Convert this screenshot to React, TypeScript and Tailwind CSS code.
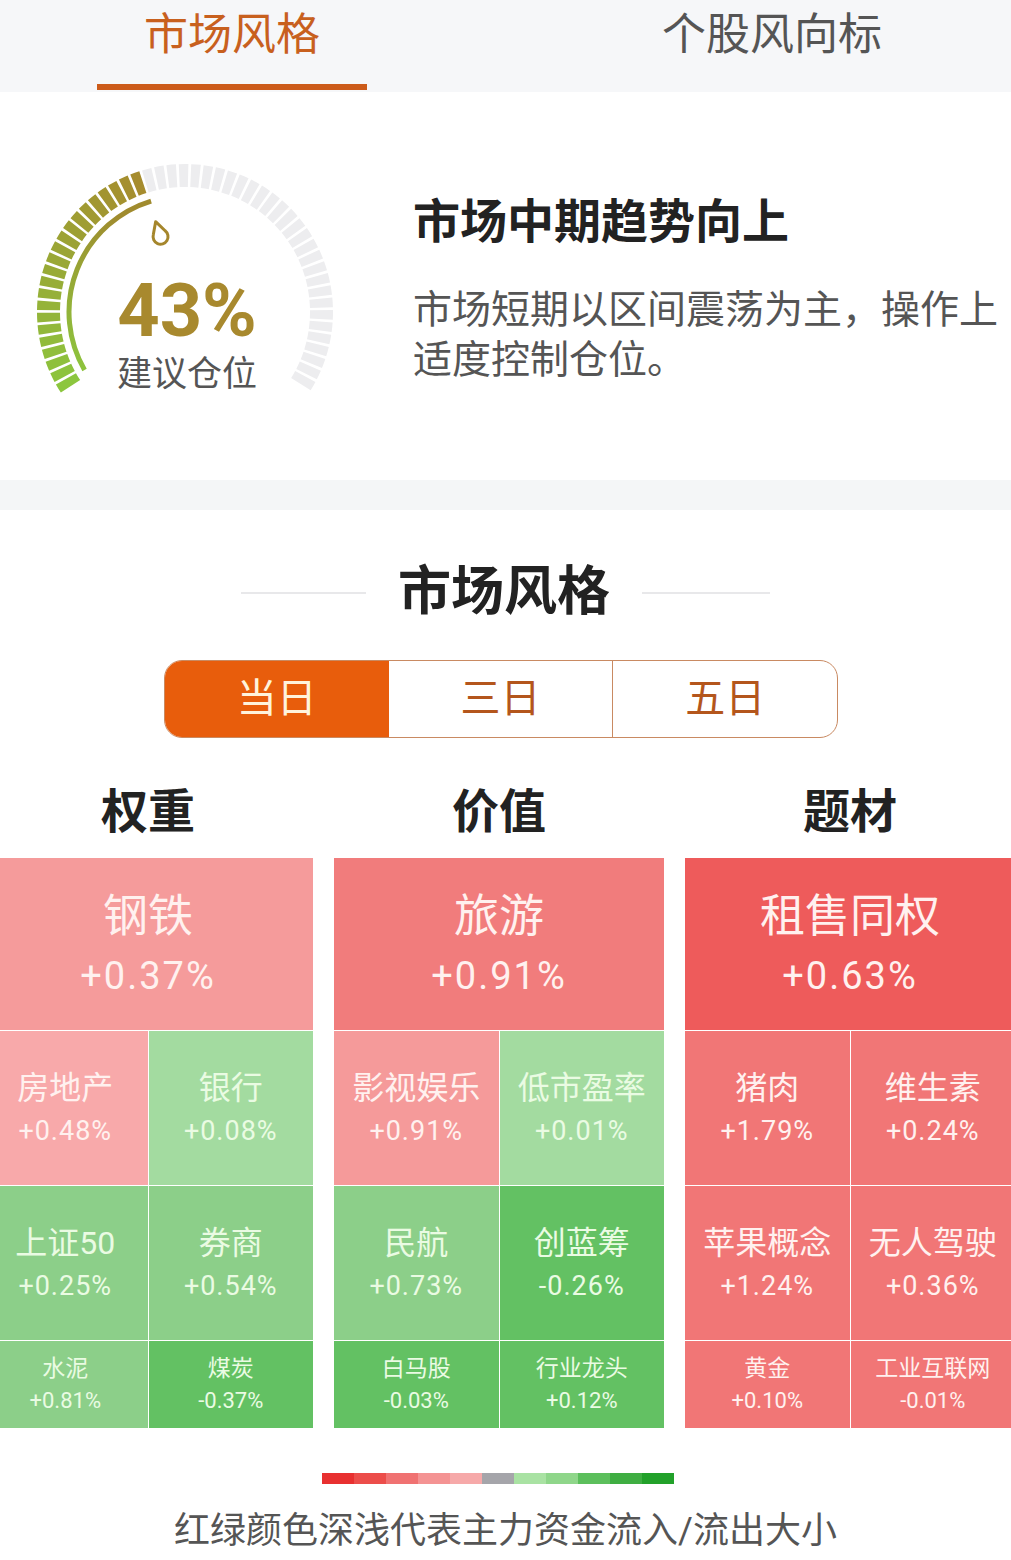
import React from 'react';

type Tile = { name: string; pct: string; bg: string; green?: boolean };
type Column = { title: string; big: Tile; rows: [Tile, Tile][] };

const RED_TEXT = 'text-[#fff1ef]';
const GREEN_TEXT = 'text-[#eafbe3]';

const columns: Column[] = [
  {
    title: '权重',
    big: { name: '钢铁', pct: '+0.37%', bg: 'bg-[#f59b9b]' },
    rows: [
      [
        { name: '房地产', pct: '+0.48%', bg: 'bg-[#f8a9aa]' },
        { name: '银行', pct: '+0.08%', bg: 'bg-[#a3dba0]', green: true },
      ],
      [
        { name: '上证50', pct: '+0.25%', bg: 'bg-[#8ccf89]', green: true },
        { name: '券商', pct: '+0.54%', bg: 'bg-[#8ccf89]', green: true },
      ],
      [
        { name: '水泥', pct: '+0.81%', bg: 'bg-[#8ccf89]', green: true },
        { name: '煤炭', pct: '-0.37%', bg: 'bg-[#63c163]', green: true },
      ],
    ],
  },
  {
    title: '价值',
    big: { name: '旅游', pct: '+0.91%', bg: 'bg-[#f17c7c]' },
    rows: [
      [
        { name: '影视娱乐', pct: '+0.91%', bg: 'bg-[#f59a9a]' },
        { name: '低市盈率', pct: '+0.01%', bg: 'bg-[#a3dba0]', green: true },
      ],
      [
        { name: '民航', pct: '+0.73%', bg: 'bg-[#8ccf89]', green: true },
        { name: '创蓝筹', pct: '-0.26%', bg: 'bg-[#63c163]', green: true },
      ],
      [
        { name: '白马股', pct: '-0.03%', bg: 'bg-[#63c163]', green: true },
        { name: '行业龙头', pct: '+0.12%', bg: 'bg-[#63c163]', green: true },
      ],
    ],
  },
  {
    title: '题材',
    big: { name: '租售同权', pct: '+0.63%', bg: 'bg-[#ee5b5b]' },
    rows: [
      [
        { name: '猪肉', pct: '+1.79%', bg: 'bg-[#f17676]' },
        { name: '维生素', pct: '+0.24%', bg: 'bg-[#f17676]' },
      ],
      [
        { name: '苹果概念', pct: '+1.24%', bg: 'bg-[#f17676]' },
        { name: '无人驾驶', pct: '+0.36%', bg: 'bg-[#f17676]' },
      ],
      [
        { name: '黄金', pct: '+0.10%', bg: 'bg-[#f17676]' },
        { name: '工业互联网', pct: '-0.01%', bg: 'bg-[#f17676]' },
      ],
    ],
  },
];

const legend = [
  '#e83030', '#ec4d4a', '#f07272', '#f49393', '#f6a9a9', '#a5a5aa',
  '#a9e2a3', '#8fd68a', '#5cbf5c', '#3fae42', '#22a12a',
];

// gauge geometry (svg coords)
const CX = 170;
const CY = 160;
const START = -123;
const END = 123;
const COUNT = 51;
const VALUE_ANGLE = -16;

function pt(r: number, deg: number) {
  const a = (deg * Math.PI) / 180;
  return [CX + r * Math.sin(a), CY - r * Math.cos(a)];
}

function segPath(r1: number, r2: number, a0: number, a1: number) {
  const [x0, y0] = pt(r2, a0);
  const [x1, y1] = pt(r2, a1);
  const [x2, y2] = pt(r1, a1);
  const [x3, y3] = pt(r1, a0);
  return `M${x0} ${y0} A${r2} ${r2} 0 0 1 ${x1} ${y1} L${x2} ${y2} A${r1} ${r1} 0 0 0 ${x3} ${y3} Z`;
}

function mix(a: number[], b: number[], t: number) {
  const c = a.map((v, i) => Math.round(v + (b[i] - v) * t));
  return `rgb(${c[0]},${c[1]},${c[2]})`;
}

const Gauge: React.FC = () => {
  const step = (END - START) / COUNT;
  const greenCount = Math.round((VALUE_ANGLE - START) / step);
  const segs = Array.from({ length: COUNT }, (_, i) => {
    const a0 = START + i * step;
    const a1 = a0 + step - 1.1;
    const isGreen = i < greenCount;
    const fill = isGreen
      ? mix([140, 198, 62], [166, 140, 46], greenCount > 1 ? i / (greenCount - 1) : 0)
      : '#ededef';
    return <path key={i} d={segPath(125, 148, a0, a1)} fill={fill} />;
  });

  const [ax, ay] = pt(116, -120);
  const [bx, by] = pt(116, VALUE_ANGLE - 1);
  const [mx, my] = pt(78, VALUE_ANGLE - 2);

  return (
    <div className="relative w-[340px] h-[270px]">
      <svg width="340" height="270" viewBox="0 0 340 270" className="absolute inset-0">
        <defs>
          <linearGradient id="inner" x1="0" y1="1" x2="0.3" y2="0">
            <stop offset="0" stopColor="#8cc63e" />
            <stop offset="1" stopColor="#a08b2e" />
          </linearGradient>
        </defs>
        {segs}
        <path
          d={`M${ax} ${ay} A116 116 0 0 1 ${bx} ${by}`}
          fill="none"
          stroke="url(#inner)"
          strokeWidth="5"
        />
        <g transform={`translate(${mx} ${my}) rotate(${VALUE_ANGLE - 2})`}>
          <path
            d="M0 -17 L6.2 -5.4 A7.5 7.5 0 1 1 -6.2 -5.4 Z"
            fill="#fff"
            stroke="#a5862c"
            strokeWidth="3"
            strokeLinejoin="round"
          />
        </g>
      </svg>
      <div className="absolute left-0 right-0 top-[122px] flex justify-center">
        <span className="text-[74px] leading-none font-bold text-[#a8892e] pl-[4px]">43%</span>
      </div>
      <div className="absolute left-0 right-0 top-[205px] flex justify-center">
        <span className="text-[35px] leading-none text-[#555] pl-[4px]">建议仓位</span>
      </div>
    </div>
  );
};

const TileText: React.FC<{ tile: Tile; size: 'big' | 'mid' | 'small' }> = ({ tile, size }) => {
  const color = tile.green ? GREEN_TEXT : RED_TEXT;
  if (size === 'big') {
    return (
      <div className={`flex flex-col items-center justify-center gap-[18px] h-[172px] ${tile.bg} ${color}`}>
        <span className="text-[45px] leading-none">{tile.name}</span>
        <span className="text-[38px] leading-none tracking-[2px]">{tile.pct}</span>
      </div>
    );
  }
  if (size === 'mid') {
    return (
      <div className={`flex flex-col items-center justify-center gap-[14px] h-[154px] ${tile.bg} ${color}`}>
        <span className="text-[32px] leading-none whitespace-nowrap">{tile.name}</span>
        <span className="text-[27px] leading-none tracking-[1px]">{tile.pct}</span>
      </div>
    );
  }
  return (
    <div className={`flex flex-col items-center justify-center gap-[10px] h-[87px] ${tile.bg} ${color}`}>
      <span className="text-[23px] leading-none whitespace-nowrap">{tile.name}</span>
      <span className="text-[22px] leading-none">{tile.pct}</span>
    </div>
  );
};

export default function App() {
  return (
    <div className="w-[1011px] min-h-[1560px] bg-white overflow-hidden font-[Roboto,'Noto_Sans_CJK_SC',sans-serif]">
      {/* top tabs */}
      <div className="flex h-[92px] bg-[#f6f7f9]">
        <div className="w-[464px] flex flex-col items-center pt-[13px]">
          <span className="text-[44px] leading-none text-[#c8601e]">市场风格</span>
          <div className="mt-[27px] w-[270px] h-[6px] bg-[#cc5b1a]" />
        </div>
        <div className="pl-[198px] pt-[13px]">
          <span className="text-[44px] leading-none text-[#555]">个股风向标</span>
        </div>
      </div>

      {/* position gauge */}
      <div className="flex items-start h-[388px]">
        <div className="ml-[15px] mt-[60px]">
          <Gauge />
        </div>
        <div className="ml-[58px] pt-[106px]">
          <div className="text-[47px] leading-none font-bold text-[#222] whitespace-nowrap">市场中期趋势向上</div>
          <div className="mt-[40px] text-[39px] leading-[50px] text-[#555] whitespace-nowrap">
            市场短期以区间震荡为主，操作上
            <br />
            适度控制仓位。
          </div>
        </div>
      </div>

      <div className="h-[30px] bg-[#f4f6f7]" />

      {/* market style */}
      <div className="flex items-center justify-center mt-[56px]">
        <div className="w-[125px] h-[2px] bg-[#e8e8ea]" />
        <span className="mx-[32px] text-[53px] leading-none font-bold text-[#222]">市场风格</span>
        <div className="w-[128px] h-[2px] bg-[#e8e8ea]" />
      </div>

      <div className="ml-[164px] mt-[41px] w-[674px] h-[78px] flex rounded-[18px] border border-[#c98a62] overflow-hidden">
        <div className="flex-1 flex items-center justify-center bg-[#e85d0c] text-[40px] leading-none text-[#fff3dc]">当日</div>
        <div className="flex-1 flex items-center justify-center text-[40px] leading-none text-[#b4561c]">三日</div>
        <div className="flex-1 flex items-center justify-center border-l border-[#c98a62] text-[40px] leading-none text-[#b4561c]">五日</div>
      </div>

      {/* columns */}
      <div className="ml-[-17px] mt-[50px] grid grid-cols-[330px_330px_330px] gap-x-[21px]">
        {columns.map((c) => (
          <div key={c.title} className="flex justify-center">
            <span className="text-[47px] leading-none font-bold text-[#222]">{c.title}</span>
          </div>
        ))}
      </div>
      <div className="ml-[-17px] mt-[23px] grid grid-cols-[330px_330px_330px] gap-x-[21px]">
        {columns.map((c) => (
          <div key={c.title} className="flex flex-col gap-px bg-white">
            <TileText tile={c.big} size="big" />
            {c.rows.map((row, ri) => (
              <div key={ri} className="grid grid-cols-2 gap-px">
                {row.map((t) => (
                  <TileText key={t.name} tile={t} size={ri === 2 ? 'small' : 'mid'} />
                ))}
              </div>
            ))}
          </div>
        ))}
      </div>

      {/* legend */}
      <div className="ml-[322px] mt-[45px] flex h-[11px] w-[352px]">
        {legend.map((c) => (
          <div key={c} className="flex-1" style={{ backgroundColor: c }} />
        ))}
      </div>
      <div className="mt-[29px] flex justify-center">
        <span className="text-[36px] leading-none text-[#555] whitespace-nowrap">红绿颜色深浅代表主力资金流入/流出大小</span>
      </div>
    </div>
  );
}
